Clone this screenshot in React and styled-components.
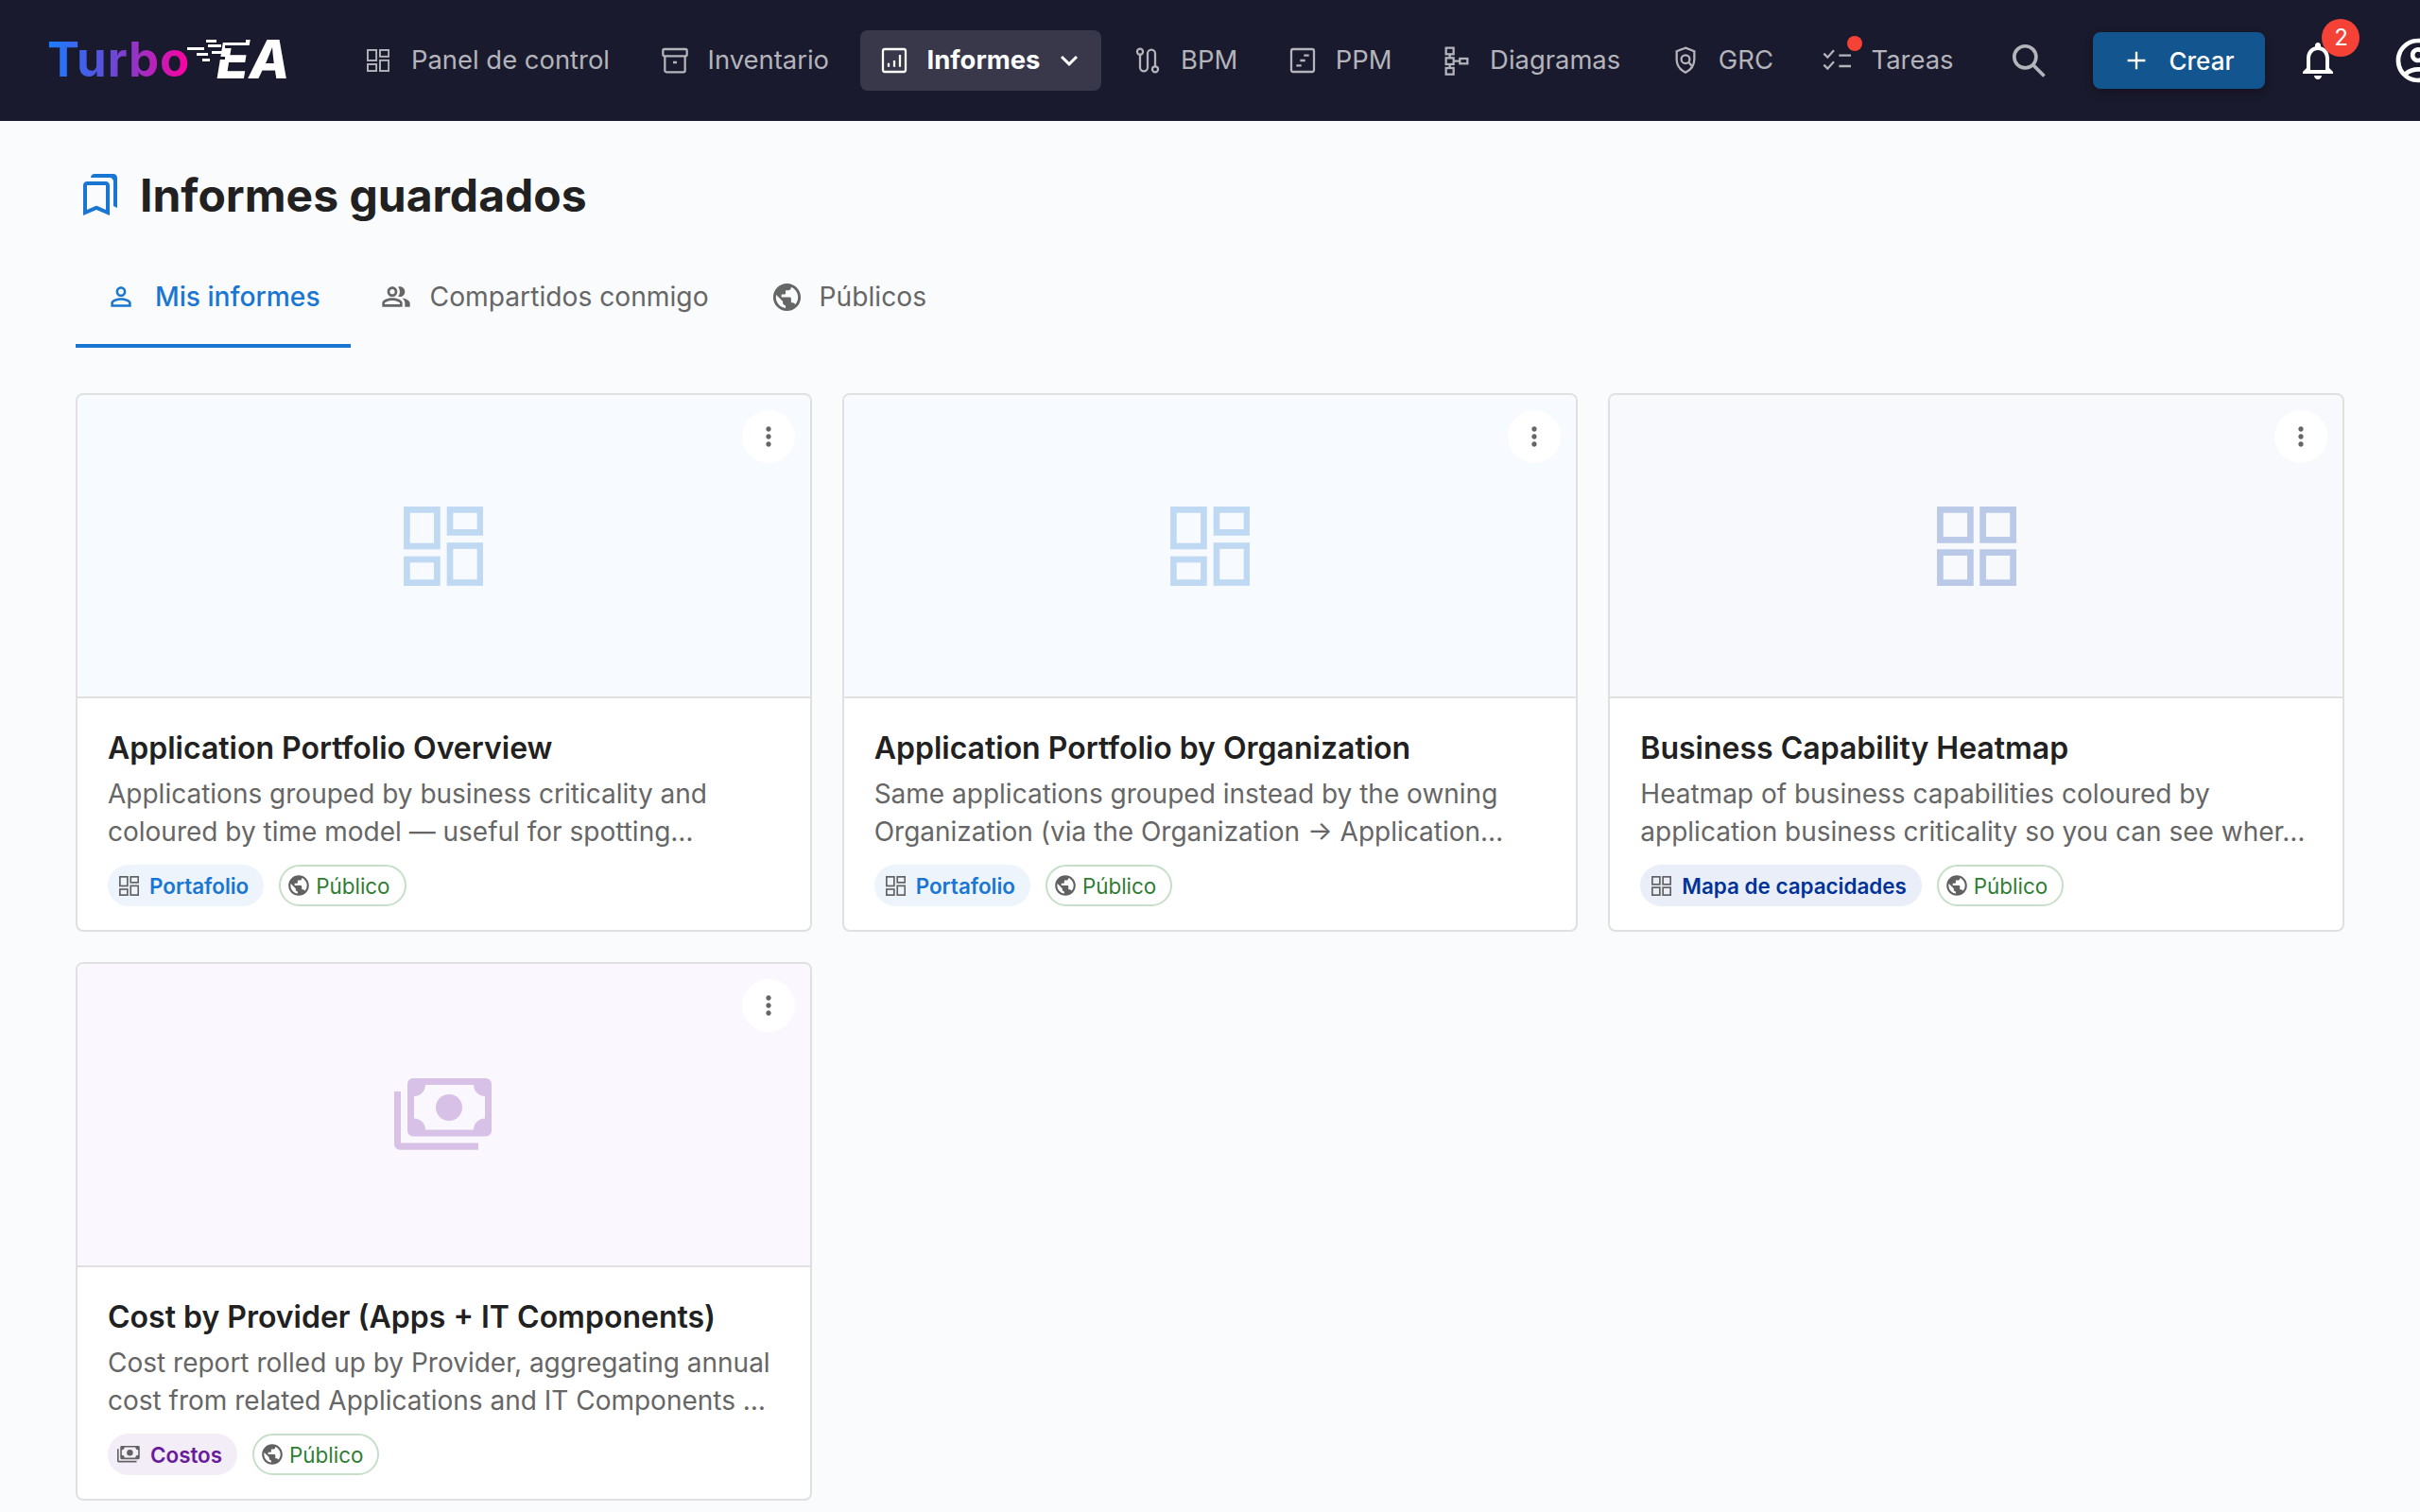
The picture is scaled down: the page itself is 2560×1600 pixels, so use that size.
import React from 'react'
import styled, { createGlobalStyle } from 'styled-components'
import { MdOutlinePersonOutline, MdOutlinePeopleAlt, MdPublic, MdMoreVert, MdOutlineBookmarks, MdKeyboardArrowDown, MdNotificationsNone, MdOutlineAccountCircle } from 'react-icons/md'

const Global = createGlobalStyle`
  html, body { margin: 0; padding: 0; background: #fafbfd; }
  body { font-family: Inter, "Liberation Sans", sans-serif; color: #212121; }
  * { box-sizing: border-box; }
`

const Page = styled.div`
  width: 2560px;
  height: 1600px;
  overflow: hidden;
`

const Header = styled.header`
  display: flex;
  align-items: center;
  height: 128px;
  padding-left: 50px;
  background: #1a1a2e;
  overflow: hidden;
`

const Logo = styled.div`
  position: relative;
  display: flex;
  flex: none;
  align-items: center;
  width: 254px;
  margin-right: 60px;
  margin-top: -2px;
  font-size: 51px;
  line-height: 60px;
`

const LogoTurbo = styled.span`
  font-weight: 700;
  letter-spacing: 0.8px;
  background: linear-gradient(90deg, #1a7dff 0%, #5a50dc 40%, #ff00a0 100%);
  -webkit-background-clip: text;
  background-clip: text;
  color: transparent;
`

const LogoEA = styled.span`
  margin-left: 28px;
  font-size: 56px;
  font-weight: 800;
  font-style: italic;
  color: #fff;
`

const LogoLines = styled.svg`
  position: absolute;
  left: 148px;
  top: 8px;
`

const Nav = styled.nav`
  display: flex;
  flex: none;
  align-items: center;
  gap: 12.6px;
`

const NavItem = styled.div`
  display: flex;
  position: relative;
  align-items: center;
  gap: 19px;
  height: 64px;
  padding: 0 20px;
  border-radius: 8px;
  font-size: 27.4px;
  font-weight: ${p => (p.$active ? 700 : 400)};
  color: ${p => (p.$active ? '#fff' : '#b4b4bb')};
  background: ${p => (p.$active ? '#38384a' : 'transparent')};
  white-space: nowrap;
`

const NavLabel = styled.span`
  margin-bottom: 2px;
`

const NavIcon = styled.svg`
  flex: none;
  width: 32px;
  height: 32px;
  fill: none;
  stroke: currentColor;
  stroke-width: 1.7;
`

const NavDash = styled.span`
  display: flex;
  flex: none;
  justify-content: center;
  width: 32px;
`

const Chevron = styled(MdKeyboardArrowDown)`
  flex: none;
  margin: 0 -4px 0 -6px;
  font-size: 36px;
`

const RedDot = styled.span`
  position: absolute;
  top: 6px;
  left: 46px;
  width: 16px;
  height: 16px;
  border-radius: 50%;
  background: #f44336;
`

const SearchIcon = styled.svg`
  flex: none;
  width: 44px;
  height: 44px;
  margin-left: 38px;
  fill: none;
  stroke: #b4b4bb;
  stroke-width: 2;
`

const CreateButton = styled.div`
  display: flex;
  flex: none;
  align-items: center;
  gap: 18px;
  width: 182px;
  height: 60px;
  margin-left: 46px;
  padding-left: 30px;
  border-radius: 8px;
  background: #12558f;
  box-shadow: 0 4px 10px rgba(0, 0, 0, 0.3);
  font-size: 26px;
  font-weight: 500;
  color: #fff;
`

const PlusIcon = styled.svg`
  flex: none;
  width: 32px;
  height: 32px;
  stroke: #fff;
  stroke-width: 1.8;
`

const Bell = styled.div`
  position: relative;
  flex: none;
  width: 48px;
  height: 48px;
  margin-left: 32px;
  color: #fff;
  font-size: 48px;
  line-height: 0;
`

const Badge = styled.span`
  position: absolute;
  top: -20px;
  left: 28px;
  width: 40px;
  height: 40px;
  border-radius: 50%;
  background: #f44336;
  font-size: 24px;
  line-height: 40px;
  text-align: center;
  color: #fff;
`

const Avatar = styled(MdOutlineAccountCircle)`
  flex: none;
  margin-left: 54px;
  color: #fff;
  font-size: 56px;
`

const Main = styled.main`
  padding: 50px 80px 0;
`

const TitleRow = styled.div`
  display: flex;
  align-items: center;
  gap: 18px;
  height: 56px;
`

const TitleIcon = styled(MdOutlineBookmarks)`
  flex: none;
  margin-left: 2px;
  color: #1976d2;
  font-size: 48px;
`

const Title = styled.h1`
  margin: 0;
  font-size: 48px;
  font-weight: 700;
  color: #212121;
`

const Tabs = styled.div`
  display: flex;
  align-items: stretch;
  height: 96px;
  margin-top: 38px;
`

const Tab = styled.div`
  display: flex;
  align-items: center;
  gap: 20px;
  padding: 0 32px 8px;
  font-size: 28.2px;
  font-weight: ${p => (p.$active ? 500 : 400)};
  color: ${p => (p.$active ? '#1976d2' : '#666')};
  border-bottom: 4px solid ${p => (p.$active ? '#1976d2' : 'transparent')};
  white-space: nowrap;
`

const GlobeTabIcon = styled(MdPublic)`
  flex: none;
  margin: 0 -3px 0 1px;
  font-size: 35px;
`

const Grid = styled.div`
  display: grid;
  grid-template-columns: repeat(3, 1fr);
  gap: 32px;
  margin-top: 48px;
`

const Card = styled.article`
  overflow: hidden;
  height: 570px;
  border: 2px solid #e0e0e0;
  border-radius: 8px;
  background: #fff;
`

const Preview = styled.div`
  position: relative;
  display: flex;
  align-items: center;
  justify-content: center;
  height: 321px;
  border-bottom: 2px solid #e0e0e0;
  background: ${p => p.$bg};
  color: ${p => p.$ink};
`

const MenuButton = styled.div`
  position: absolute;
  top: 16px;
  right: 16px;
  display: flex;
  align-items: center;
  justify-content: center;
  width: 56px;
  height: 56px;
  border-radius: 50%;
  background: rgba(255, 255, 255, 0.9);
  color: #666;
  font-size: 32px;
`

const CardBody = styled.div`
  padding: 31px 32px 0;
`

const CardTitle = styled.h3`
  margin: 0;
  font-size: 32px;
  font-weight: 600;
  line-height: 44px;
  color: #212121;
`

const CardDesc = styled.p`
  margin: 6px 0 0;
  font-size: 28px;
  line-height: 40px;
  color: #666;
`

const Chips = styled.div`
  display: flex;
  gap: 16px;
  margin-top: 15px;
`

const TypeChip = styled.span`
  display: inline-flex;
  align-items: center;
  gap: 11px;
  height: 44px;
  padding: 0 16px 0 ${p => p.$pad}px;
  border-radius: 22px;
  background: ${p => p.$bg};
  color: ${p => p.$ink};
  font-size: 22.4px;
  font-weight: 600;
  svg { color: #616161; }
`

const PublicChip = styled.span`
  display: inline-flex;
  align-items: center;
  gap: 5px;
  height: 44px;
  padding: 0 15px 0 6px;
  border: 2px solid #c6dfc8;
  border-radius: 22px;
  color: #2e7d32;
  font-size: 22.4px;
  svg { color: #616161; font-size: 26px; }
`

const DashIcon = ({ size }) => (
  <svg width={size} height={size} viewBox="0 0 84 84" fill="none" stroke="currentColor" strokeWidth="6.7">
    <rect x="3.4" y="3.4" width="32" height="38.6" />
    <rect x="49" y="3.4" width="32" height="24" />
    <rect x="3.4" y="56" width="32" height="24.6" />
    <rect x="49" y="41.5" width="32" height="39" />
  </svg>
)

const GridIcon = ({ size }) => (
  <svg width={size} height={size} viewBox="0 0 84 84" fill="none" stroke="currentColor" strokeWidth="6.7">
    <rect x="3.4" y="3.4" width="32" height="32" />
    <rect x="48.6" y="3.4" width="32" height="32" />
    <rect x="3.4" y="48.6" width="32" height="32" />
    <rect x="48.6" y="48.6" width="32" height="32" />
  </svg>
)

const CashIcon = ({ size }) => (
  <svg width={size} height={size * 0.75} viewBox="0 0 104 78" fill="currentColor">
    <path
      fillRule="evenodd"
      d="M20 0h77a6 6 0 0 1 6 6v49.5a6 6 0 0 1-6 6H20a6 6 0 0 1-6-6V6a6 6 0 0 1 6-6zM33 7A12 12 0 0 1 21 19v23.5A12 12 0 0 1 33 54.5h51A12 12 0 0 1 96 42.5V19A12 12 0 0 1 84 7z"
    />
    <circle cx="58" cy="31" r="14" />
    <path d="M0 14h7v54.5h82v7.2H6a6 6 0 0 1-6-6z" />
  </svg>
)

const navItems = [
  { label: 'Panel de control', dash: true },
  { label: 'Inventario', icon: <><rect x="2.5" y="3" width="19" height="5.5" rx="1.2" /><path d="M4 8.5V20a1.2 1.2 0 0 0 1.2 1.2h13.6A1.2 1.2 0 0 0 20 20V8.5M10.5 13.5h3" /></> },
  { label: 'Informes', active: true, icon: <><rect x="3" y="3" width="18" height="18" rx="1.5" /><path d="M7.5 17v-3M12 17v-5M16.5 17V7.5" /></> },
  { label: 'BPM', icon: <><circle cx="6" cy="5" r="2.3" /><path d="M6 7.3v10.2a3 3 0 0 0 6 0v-11a3 3 0 0 1 6 0v10.2" /><circle cx="18" cy="19" r="2.3" /></> },
  { label: 'PPM', icon: <><rect x="3" y="3" width="18" height="18" rx="1.5" /><path d="M13 8h4M10 12h4M7 16h4" /></> },
  { label: 'Diagramas', icon: <><rect x="3.5" y="2" width="6" height="5" /><rect x="3.5" y="10" width="6" height="5" /><rect x="3.5" y="18" width="6" height="5" /><rect x="14.5" y="10.5" width="6" height="4" /><path d="M6.5 7v3M6.5 15v3M9.5 12.5h5" /></> },
  { label: 'GRC', icon: <><path d="M12 2l7 2.7v6.3c0 4.6-3 8.5-7 10.5-4-2-7-5.9-7-10.5V4.7z" /><circle cx="12" cy="11" r="3.3" /><path d="M14.4 13.4l2.6 3" /></> },
  { label: 'Tareas', dot: true, icon: <><path d="M1 6.5l3 3L9 4M1 15.5l3 3 5-5.5M13 8h9.5M13 16.5h9.5" /></> },
]

const reports = [
  {
    title: 'Application Portfolio Overview',
    desc: 'Applications grouped by business criticality and coloured by time model — useful for spotting…',
    chip: 'Portafolio', chipBg: '#edf4fc', chipInk: '#1976d2', chipIcon: 21, chipPad: 12,
    bg: '#f7fbff', ink: '#c0d9f3', icon: DashIcon, iconSize: 84,
  },
  {
    title: 'Application Portfolio by Organization',
    desc: 'Same applications grouped instead by the owning Organization (via the Organization → Application…',
    chip: 'Portafolio', chipBg: '#edf4fc', chipInk: '#1976d2', chipIcon: 21, chipPad: 12,
    bg: '#f7fbff', ink: '#c0d9f3', icon: DashIcon, iconSize: 84,
  },
  {
    title: 'Business Capability Heatmap',
    desc: 'Heatmap of business capabilities coloured by application business criticality so you can see wher…',
    chip: 'Mapa de capacidades', chipBg: '#eaeef8', chipInk: '#003399', chipIcon: 21, chipPad: 12,
    bg: '#f7f9fd', ink: '#bac9e8', icon: GridIcon, iconSize: 84,
  },
  {
    title: 'Cost by Provider (Apps + IT Components)',
    desc: 'Cost report rolled up by Provider, aggregating annual cost from related Applications and IT Components …',
    chip: 'Costos', chipBg: '#f3edf8', chipInk: '#6a1b9a', chipIcon: 24, chipPad: 10,
    bg: '#faf8fe', ink: '#d8c1e7', icon: CashIcon, iconSize: 104,
  },
]

export default function App() {
  return (
    <Page>
      <Global />
      <Header>
        <Logo>
          <LogoTurbo>Turbo</LogoTurbo>
          <LogoEA>EA</LogoEA>
          <LogoLines width="70" height="44" viewBox="0 0 70 44" fill="#fff">
            <rect x="20" y="1" width="11" height="3" />
            <rect x="36" y="1" width="26" height="3" fill="#1a1a2e" />
            <rect x="0" y="9" width="18" height="3" />
            <rect x="22" y="6" width="14" height="3" />
            <rect x="40" y="7" width="30" height="3" fill="#1a1a2e" />
            <rect x="10" y="15" width="12" height="3" />
            <rect x="26" y="13" width="16" height="3" />
            <rect x="16" y="21" width="8" height="3" />
            <rect x="28" y="19" width="12" height="3" fill="#1a1a2e" />
          </LogoLines>
        </Logo>
        <Nav>
          {navItems.map(item => (
            <NavItem key={item.label} $active={item.active}>
              {item.dash ? (
                <NavDash><DashIcon size={24} /></NavDash>
              ) : (
                <NavIcon viewBox="0 0 24 24">{item.icon}</NavIcon>
              )}
              <NavLabel>{item.label}</NavLabel>
              {item.active && <Chevron />}
              {item.dot && <RedDot />}
            </NavItem>
          ))}
        </Nav>
        <SearchIcon viewBox="0 0 24 24">
          <circle cx="10" cy="10" r="6.3" />
          <path d="M14.6 14.6L21 21" />
        </SearchIcon>
        <CreateButton>
          <PlusIcon viewBox="0 0 24 24"><path d="M12 5v14M5 12h14" /></PlusIcon>
          Crear
        </CreateButton>
        <Bell>
          <MdNotificationsNone />
          <Badge>2</Badge>
        </Bell>
        <Avatar />
      </Header>
      <Main>
        <TitleRow>
          <TitleIcon />
          <Title>Informes guardados</Title>
        </TitleRow>
        <Tabs>
          <Tab $active><MdOutlinePersonOutline size={32} />Mis informes</Tab>
          <Tab><MdOutlinePeopleAlt size={32} />Compartidos conmigo</Tab>
          <Tab><GlobeTabIcon />Públicos</Tab>
        </Tabs>
        <Grid>
          {reports.map(r => (
            <Card key={r.title}>
              <Preview $bg={r.bg} $ink={r.ink}>
                <r.icon size={r.iconSize} />
                <MenuButton><MdMoreVert /></MenuButton>
              </Preview>
              <CardBody>
                <CardTitle>{r.title}</CardTitle>
                <CardDesc>{r.desc}</CardDesc>
                <Chips>
                  <TypeChip $bg={r.chipBg} $ink={r.chipInk} $pad={r.chipPad}>
                    <r.icon size={r.chipIcon} />
                    {r.chip}
                  </TypeChip>
                  <PublicChip><MdPublic />Público</PublicChip>
                </Chips>
              </CardBody>
            </Card>
          ))}
        </Grid>
      </Main>
    </Page>
  )
}
